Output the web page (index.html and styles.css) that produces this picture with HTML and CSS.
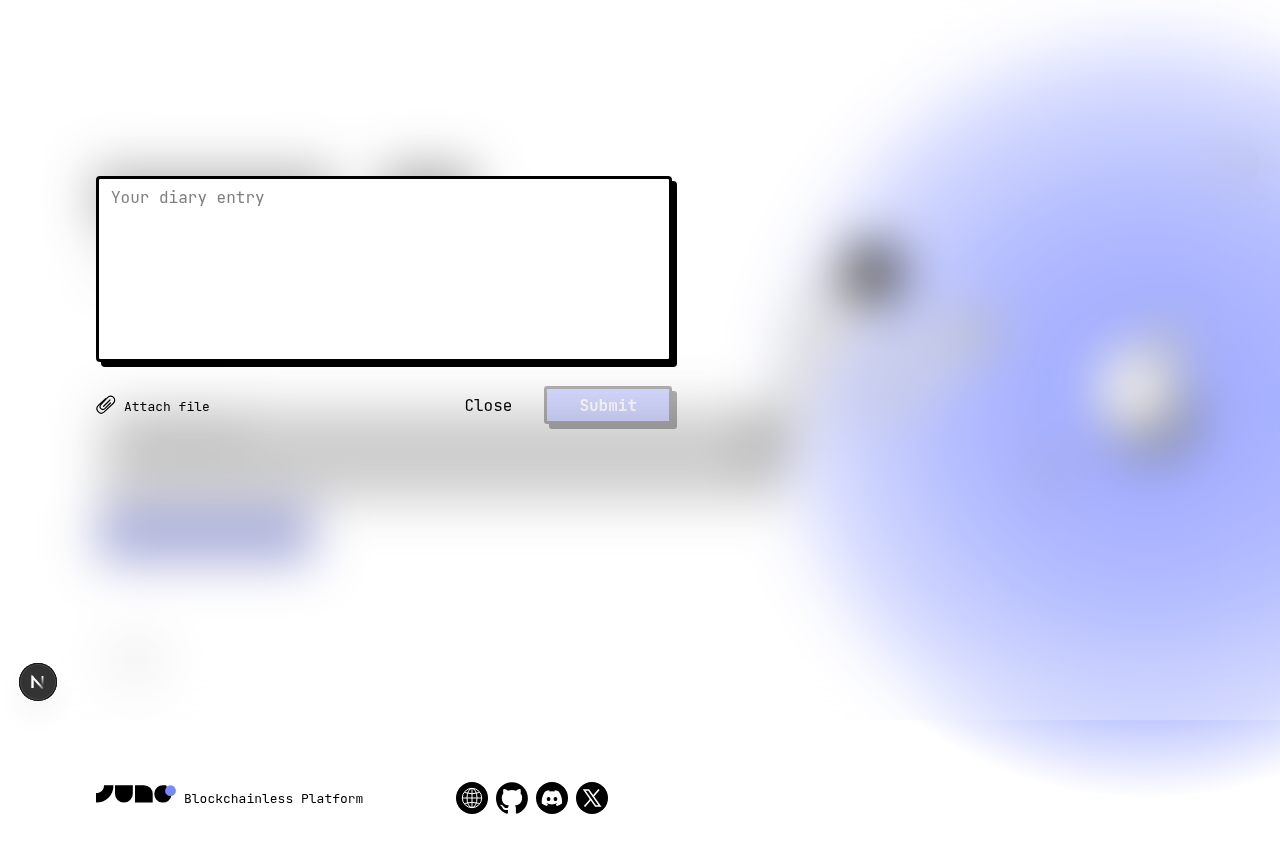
FILE: index.html
```html
<!DOCTYPE html>
<html lang="en">
<head>
<meta charset="utf-8">
<meta name="viewport" content="width=device-width, initial-scale=1">
<title>Diary</title>
<link rel="stylesheet" href="styles.css">
</head>
<body>
<div class="scene" aria-hidden="true">
  <svg width="1280" height="862" viewBox="0 0 1280 862">
    <defs>
      <radialGradient id="glow">
        <stop offset="0" stop-color="#7888ff"/>
        <stop offset=".25" stop-color="#7f8eff"/>
        <stop offset=".5" stop-color="#93a0ff"/>
        <stop offset=".8" stop-color="#c1c9ff"/>
        <stop offset="1" stop-color="#fff"/>
      </radialGradient>
    </defs>
    <circle cx="1148" cy="402" r="396" fill="url(#glow)"/>
    <rect x="92" y="168" width="242" height="60" fill="#999"/>
    <rect x="382" y="166" width="92" height="60" fill="#888"/>
    <rect x="96" y="240" width="300" height="40" fill="#e4e4e4"/>
    <rect x="102" y="408" width="682" height="92" fill="#b7b7b7"/>
    <ellipse cx="766" cy="440" rx="26" ry="34" fill="#959595"/>
    <rect x="130" y="412" width="120" height="44" fill="#a8a8a8"/>
    <rect x="98" y="506" width="216" height="56" fill="#8289ca"/>
    <circle cx="136" cy="660" r="26" fill="#e6e6e6"/>
    <path d="M776 410Q780 310 830 262L880 310Q830 350 800 450Z" fill="#cfcfd4"/>
    <path d="M840 430L870 330 960 300 990 350 900 430Z" fill="#b0b7e4"/>
    <circle cx="873" cy="273" r="32" fill="#101010"/>
    <circle cx="976" cy="334" r="25" fill="#9fa3b8"/>
    <circle cx="1236" cy="164" r="24" fill="#a0a8e0"/>
    <circle cx="1050" cy="468" r="22" fill="#8087da"/>
    <ellipse cx="1152" cy="415" rx="48" ry="46" fill="#4c5270"/>
    <ellipse cx="1136" cy="389" rx="40" ry="44" fill="#e4e4e0"/>
    <circle cx="1166" cy="346" r="24" fill="#9a9fb4"/>
  </svg>
</div>
<main class="main">
  <div class="backdrop"></div>
  <form class="entry">
    <textarea class="entry-text" placeholder="Your diary entry" aria-label="Your diary entry"></textarea>
    <div class="actions">
      <button class="attach" type="button">
        <svg class="clip" width="20" height="20" viewBox="0 -1 20 20" fill="none" stroke="currentColor" stroke-width="1.200" stroke-linecap="round" stroke-linejoin="round" aria-hidden="true"><path d="M9.700 3.600 2.400 10.400C-1.500 14.200 3.400 20.600 7.900 17.100L17.100 8.500C21.500 4.300 15.600-1.600 11.500 2.600L5.100 9.300C2.200 12.400 6.100 16.200 9.100 13.400L14.400 8"/><path d="M14 5 7.600 11.300"/></svg><span>Attach file</span>
      </button>
      <button class="close" type="button">Close</button>
      <button class="submit" type="submit" disabled>Submit</button>
    </div>
  </form>
  <button class="devtools" type="button" aria-label="Open developer tools">
    <svg width="38" height="38" viewBox="0 0 38 38" fill="none" aria-hidden="true">
      <defs>
        <linearGradient id="stem" x1="0" y1="13" x2="0" y2="23" gradientUnits="userSpaceOnUse"><stop stop-color="#fff"/><stop offset="1" stop-color="#fff" stop-opacity="0"/></linearGradient>
        <linearGradient id="slash" x1="20" y1="20" x2="25" y2="26" gradientUnits="userSpaceOnUse"><stop stop-color="#fff"/><stop offset="1" stop-color="#fff" stop-opacity=".2"/></linearGradient>
      </defs>
      <path d="M13.500 25V14L23.800 25.500" stroke="url(#slash)" stroke-width="1.900"/>
      <path d="M13.500 13V25" stroke="#fff" stroke-width="1.900"/>
      <path d="M23.500 13V23" stroke="url(#stem)" stroke-width="1.900"/>
    </svg>
  </button>
</main>
<footer class="footer">
  <a class="brand" href="#">
    <svg width="80" height="18" viewBox="0 0 80 18" role="img" aria-label="Juno">
      <path d="M8 .2H17.500C17.500 10.500 10 17.600 0 17.600V8C5 8 8 5 8 .2ZM19 .2H36.800V8.700A8.900 8.900 0 0 1 19 8.700ZM39 .2H48A8.700 8.700 0 0 1 56.700 9V17.600H39Z"/>
      <path d="M67 .2A8.700 8.700 0 1 0 75.600 10L70 .2Z"/>
      <circle cx="74.500" cy="5.700" r="5.400" fill="#7888ff"/>
    </svg>
    <span>Blockchainless Platform</span>
  </a>
  <nav class="social" aria-label="Social links">
    <a href="#" aria-label="Website"><svg width="32" height="32" viewBox="0 0 32 32"><circle cx="16" cy="16" r="16"/><g fill="none" stroke="#fff"><circle cx="16" cy="16" r="9.700"/><ellipse cx="16" cy="16" rx="5" ry="9.700"/><path d="M16 6.300V25.700M6.300 16H25.700M8.500 10.500Q16 13 23.500 10.500M8.500 21.500Q16 19 23.500 21.500"/></g></svg></a>
    <a href="#" aria-label="GitHub"><svg width="32" height="32" viewBox="0 0 98 96"><path fill-rule="evenodd" d="M48.854 0C21.839 0 0 22 0 49.217c0 21.756 13.993 40.172 33.405 46.690 2.427.490 3.316-1.059 3.316-2.362 0-1.141-.080-5.052-.080-9.127-13.590 2.934-16.420-5.867-16.420-5.867-2.184-5.704-5.420-7.170-5.420-7.170-4.448-3.015.324-3.015.324-3.015 4.934.326 7.523 5.052 7.523 5.052 4.367 7.496 11.404 5.378 14.235 4.074.404-3.178 1.699-5.378 3.074-6.600-10.839-1.141-22.243-5.378-22.243-24.283 0-5.378 1.940-9.778 5.014-13.200-.485-1.222-2.184-6.275.486-13.038 0 0 4.125-1.304 13.426 5.052a46.970 46.970 0 0 1 12.214-1.630c4.125 0 8.330.571 12.213 1.630 9.302-6.356 13.427-5.052 13.427-5.052 2.670 6.763.970 11.816.485 13.038 3.155 3.422 5.015 7.822 5.015 13.200 0 18.905-11.404 23.060-22.324 24.283 1.780 1.548 3.316 4.481 3.316 9.126 0 6.600-.080 11.897-.080 13.526 0 1.304.890 2.853 3.316 2.364 19.412-6.520 33.405-24.935 33.405-46.691C97.707 22 75.788 0 48.854 0z"/></svg></a>
    <a href="#" aria-label="Discord"><svg width="32" height="32" viewBox="0 0 32 32"><circle cx="16" cy="16" r="16"/><g transform="translate(5.700 5.900) scale(.86)"><path fill="#fff" d="M20.317 4.370a19.791 19.791 0 0 0-4.885-1.515.074.074 0 0 0-.079.037c-.210.375-.444.864-.608 1.250a18.270 18.270 0 0 0-5.487 0 12.640 12.640 0 0 0-.617-1.250.077.077 0 0 0-.079-.037A19.736 19.736 0 0 0 3.677 4.370C.533 9.046-.320 13.580.099 18.058a.082.082 0 0 0 .031.057 19.900 19.900 0 0 0 5.993 3.030c.462-.630.874-1.295 1.226-1.994a.076.076 0 0 0-.041-.106 13.107 13.107 0 0 1-1.872-.892c.126-.094.252-.192.372-.292 3.928 1.793 8.180 1.793 12.062 0 .120.098.246.198.373.292a12.299 12.299 0 0 1-1.873.892c.360.698.772 1.362 1.225 1.993a19.839 19.839 0 0 0 6.002-3.030c.500-5.177-.838-9.674-3.549-13.660ZM8.020 15.330c-1.183 0-2.157-1.085-2.157-2.419 0-1.333.956-2.419 2.157-2.419 1.210 0 2.176 1.096 2.157 2.420 0 1.333-.956 2.418-2.157 2.418Zm7.975 0c-1.183 0-2.157-1.085-2.157-2.419 0-1.333.955-2.419 2.157-2.419 1.210 0 2.176 1.096 2.157 2.420 0 1.333-.946 2.418-2.157 2.418Z"/></g></svg></a>
    <a href="#" aria-label="X"><svg width="32" height="32" viewBox="0 0 32 32"><circle cx="16" cy="16" r="16"/><path d="M8.200 8H12.700L24 24H19.500Z" fill="none" stroke="#fff" stroke-width="1.500"/><path d="M23 7.500 17 14.500M15 17 8.500 24.500" fill="none" stroke="#fff" stroke-width="1.700"/></svg></a>
  </nav>
</footer>
</body>
</html>
```
FILE: styles.css
```css
* { box-sizing: border-box; }

body {
  position: relative;
  display: flex;
  flex-direction: column;
  min-height: 100vh;
  margin: 0;
  background: #fff;
  color: #000;
  font: 16px/24px "JetBrains Mono", "DejaVu Sans Mono", "Liberation Mono", monospace;
}

button, textarea { font: inherit; color: inherit; }
button { padding: 0; border: 0; background: none; cursor: pointer; }
svg { display: block; flex: none; }
a { color: inherit; text-decoration: none; }

.scene {
  position: absolute;
  inset: 0;
  overflow: hidden;
}

.main {
  position: relative;
  flex: 1;
  padding: 176px 96px 96px;
}

.backdrop {
  position: absolute;
  inset: 0;
  background: rgba(255, 255, 255, .3);
  backdrop-filter: blur(25px);
}

.entry {
  position: relative;
  display: flex;
  flex-direction: column;
  gap: 24px;
  max-width: 576px;
}

.entry-text {
  display: block;
  width: 100%;
  height: 186px;
  padding: 7px 12px;
  border: 3px solid #000;
  border-radius: 4px;
  background: #fff;
  box-shadow: 5px 5px 0 #000;
  resize: none;
  outline: 0;
}

.entry-text::placeholder { color: #7f7f7f; opacity: 1; }

.actions {
  display: flex;
  align-items: baseline;
  gap: 32px;
}

.attach {
  margin-right: auto;
  font-size: 13px;
}

.clip {
  display: inline-block;
  margin-right: 8px;
  vertical-align: -3px;
}

.submit {
  padding: 5px 32px 3px;
  border: 3px solid #000;
  border-radius: 3px;
  background: #7888ff;
  box-shadow: 5px 5px 0 #000;
  color: #fff;
  font-weight: 700;
}

.submit:disabled { opacity: .3; cursor: default; }

.devtools {
  position: absolute;
  left: 19px;
  bottom: 19px;
  border-radius: 50%;
  background: #333;
  box-shadow: inset 0 0 0 1px #111, inset 0 0 0 2px #4a4a4a, 0 16px 32px -8px rgba(0, 0, 0, .14);
}

.footer {
  position: relative;
  display: flex;
  align-items: center;
  padding: 62px 96px 48px;
}

.brand {
  display: flex;
  flex: 0 0 360px;
  align-items: baseline;
  gap: 8px;
  font-size: 13px;
}

.social {
  display: flex;
  gap: 8px;
}
```
